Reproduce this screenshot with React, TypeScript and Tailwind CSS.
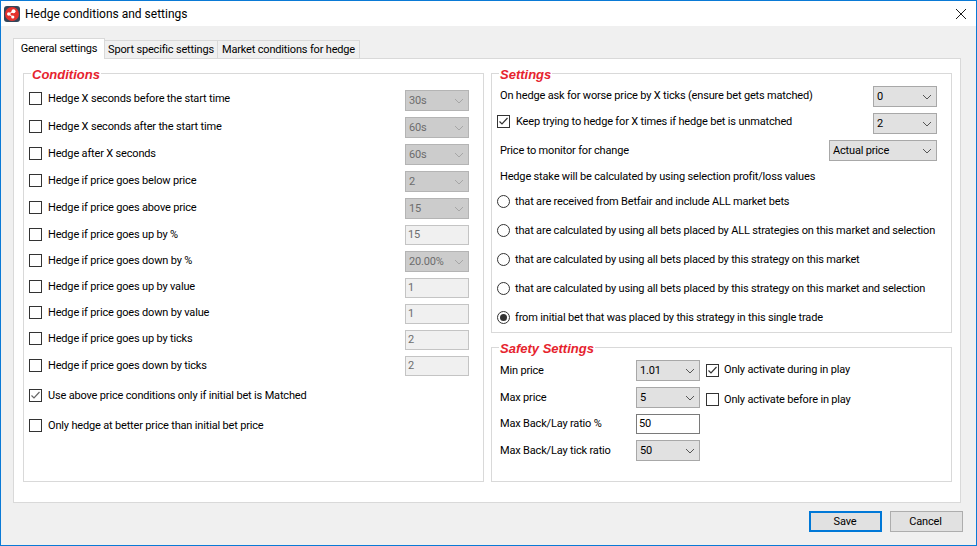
const leftRows: { label: string; mt: string; checked?: boolean }[] = [
  { label: "Hedge X seconds before the start time", mt: "mt-0" },
  { label: "Hedge X seconds after the start time", mt: "mt-[15px]" },
  { label: "Hedge after X seconds", mt: "mt-[14px]" },
  { label: "Hedge if price goes below price", mt: "mt-[14px]" },
  { label: "Hedge if price goes above price", mt: "mt-[14px]" },
  { label: "Hedge if price goes up by %", mt: "mt-[14px]" },
  { label: "Hedge if price goes down by %", mt: "mt-[13px]" },
  { label: "Hedge if price goes up by value", mt: "mt-[13px]" },
  { label: "Hedge if price goes down by value", mt: "mt-[13px]" },
  { label: "Hedge if price goes up by ticks", mt: "mt-[13px]" },
  { label: "Hedge if price goes down by ticks", mt: "mt-[14px]" },
  { label: "Use above price conditions only if initial bet is Matched", mt: "mt-[17px]", checked: true },
  { label: "Only hedge at better price than initial bet price", mt: "mt-[17px]" },
];

const rightControls: { value: string; kind: "combo" | "input" }[] = [
  { value: "30s", kind: "combo" },
  { value: "60s", kind: "combo" },
  { value: "60s", kind: "combo" },
  { value: "2", kind: "combo" },
  { value: "15", kind: "combo" },
  { value: "15", kind: "input" },
  { value: "20.00%", kind: "combo" },
  { value: "1", kind: "input" },
  { value: "1", kind: "input" },
  { value: "2", kind: "input" },
  { value: "2", kind: "input" },
];

const radios = [
  "that are received from Betfair and include ALL market bets",
  "that are calculated by using all bets placed by ALL strategies on this market and selection",
  "that are calculated by using all bets placed by this strategy on this market",
  "that are calculated by using all bets placed by this strategy on this market and selection",
  "from initial bet that was placed by this strategy in this single trade",
];

function Chevron({ disabled }: { disabled?: boolean }) {
  return (
    <svg width="10" height="6" viewBox="0 0 10 6" className="shrink-0">
      <path d="M1 1 L5 5 L9 1" fill="none" stroke={disabled ? "#a6a6a6" : "#555555"} strokeWidth="1" />
    </svg>
  );
}

function Combo({ value, width = "w-[64px]", disabled }: { value: string; width?: string; disabled?: boolean }) {
  return (
    <div
      className={`${width} h-[21px] shrink-0 flex items-center justify-between pl-[3px] pr-[4px] border border-solid whitespace-nowrap ${
        disabled ? "bg-[#cccccc] border-[#b4b4b4] text-[#6d6d6d]" : "bg-[#e1e1e1] border-[#a8a8a8] text-black"
      }`}
    >
      <span>{value}</span>
      <Chevron disabled={disabled} />
    </div>
  );
}

function Check({ checked, muted }: { checked?: boolean; muted?: boolean }) {
  return (
    <span className="w-[13px] h-[13px] shrink-0 border border-[#333333] bg-white flex items-center justify-center">
      {checked && (
        <svg width="11" height="11" viewBox="0 0 11 11">
          <path d="M1.5 5.5 L4 8 L9.5 2" fill="none" stroke={muted ? "#666666" : "#333333"} strokeWidth="1.2" />
        </svg>
      )}
    </span>
  );
}

function Radio({ checked }: { checked?: boolean }) {
  return (
    <span className="w-[13px] h-[13px] shrink-0 rounded-full border border-[#333333] bg-white flex items-center justify-center">
      {checked && <span className="w-[7px] h-[7px] rounded-full bg-[#333333]" />}
    </span>
  );
}

function Legend({ children }: { children: string }) {
  return (
    <div className="absolute left-[7px] top-[-7px] bg-white px-[1px] h-[15px] leading-[15px] text-[13px] tracking-normal font-bold italic text-[#e6232e] whitespace-nowrap font-[Liberation_Sans,sans-serif]">
      {children}
    </div>
  );
}

export default function App() {
  return (
    <div className="w-[977px] h-[546px] border border-[#0a7ad6] bg-[#f0f0f0] flex flex-col overflow-hidden text-[11px] tracking-[-0.17px] leading-[14px] text-black font-[Roboto,sans-serif]">
      <div className="h-[25px] bg-white flex items-center shrink-0">
        <svg width="16" height="16" viewBox="0 0 16 16" className="ml-[3px] mt-[1px]">
          <rect x="0" y="0" width="16" height="16" rx="3" fill="#34465a" />
          <circle cx="8" cy="8" r="7" fill="#e5322d" />
          <circle cx="4.8" cy="8" r="1.8" fill="#ffffff" />
          <circle cx="9.5" cy="5.2" r="2" fill="#ffffff" />
          <circle cx="8.8" cy="11" r="1.6" fill="#ffffff" />
          <path d="M4.8 8 L9.5 5.2 M4.8 8 L8.8 11" stroke="#ffffff" strokeWidth="1" />
        </svg>
        <span className="ml-[5px] text-[12px] tracking-normal">Hedge conditions and settings</span>
        <svg width="12" height="12" viewBox="0 0 12 12" className="ml-auto mr-[9px]">
          <path d="M1 1 L11 11 M11 1 L1 11" stroke="#1a1a1a" strokeWidth="1" />
        </svg>
      </div>

      <div className="flex-1 flex flex-col pl-[12px] pr-[15px] pt-[12px] min-h-0">
        <div className="flex items-end h-[20px] shrink-0 relative z-10 whitespace-nowrap">
          <div className="w-[92px] h-[21px] -mb-[1px] bg-white border border-b-0 border-[#d9d9d9] flex items-center justify-center">
            General settings
          </div>
          <div className="w-[113px] h-[18px] pt-[1px] bg-[#f0f0f0] border-y border-r border-b-0 border-[#d9d9d9] flex items-center justify-center">
            Sport specific settings
          </div>
          <div className="w-[142px] h-[18px] pt-[1px] bg-[#f0f0f0] border-y border-r border-b-0 border-[#d9d9d9] flex items-center justify-center">
            Market conditions for hedge
          </div>
        </div>

        <div className="h-[445px] shrink-0 bg-white border border-[#d9d9d9] flex gap-[7px] pl-[9px] pt-[14px]">
          <div className="relative w-[461px] h-[409px] border border-[#d9d9d9] flex justify-between pt-[16px] pr-[14px]">
            <Legend>Conditions</Legend>
            <div className="flex flex-col pl-[5px] pt-[2px]">
              {leftRows.map((r) => (
                <div key={r.label} className={`flex items-center h-[13px] gap-[6px] ${r.mt}`}>
                  <Check checked={r.checked} muted />
                  <span className="whitespace-nowrap">{r.label}</span>
                </div>
              ))}
            </div>
            <div className="flex flex-col gap-[6px] w-[64px]">
              {rightControls.map((c, i) =>
                c.kind === "combo" ? (
                  <Combo key={i} value={c.value} disabled />
                ) : (
                  <div
                    key={i}
                    className="w-[64px] h-[20px] border border-[#c4c4c4] bg-[#f0f0f0] text-[#6d6d6d] flex items-center pl-[2px]"
                  >
                    {c.value}
                  </div>
                )
              )}
            </div>
          </div>

          <div className="w-[461px] flex flex-col gap-[14px]">
            <div className="relative h-[260px] border border-[#d9d9d9] pt-[12px] flex flex-col">
              <Legend>Settings</Legend>
              <div className="flex items-center justify-between h-[21px] pl-[8px] pr-[14px]">
                <span className="-mt-[1px] whitespace-nowrap">On hedge ask for worse price by X ticks (ensure bet gets matched)</span>
                <Combo value="0" />
              </div>
              <div className="flex justify-between h-[21px] mt-[6px] pl-[5px] pr-[14px]">
                <div className="flex items-center h-[13px] mt-[2px] gap-[6px]">
                  <Check checked />
                  <span className="whitespace-nowrap">Keep trying to hedge for X times if hedge bet is unmatched</span>
                </div>
                <Combo value="2" />
              </div>
              <div className="flex items-center justify-between h-[21px] mt-[6px] pl-[8px] pr-[14px]">
                <span className="whitespace-nowrap">Price to monitor for change</span>
                <Combo value="Actual price" width="w-[108px]" />
              </div>
              <div className="h-[16px] mt-[8px] pl-[8px] flex items-center whitespace-nowrap">
                Hedge stake will be calculated by using selection profit/loss values
              </div>
              <div className="flex flex-col gap-[16px] mt-[10px] pl-[5px]">
                {radios.map((r, i) => (
                  <div key={r} className="flex items-center h-[13px] gap-[5px]">
                    <Radio checked={i === 4} />
                    <span className="whitespace-nowrap">{r}</span>
                  </div>
                ))}
              </div>
            </div>

            <div className="relative h-[135px] border border-[#d9d9d9] pt-[12px] flex">
              <Legend>Safety Settings</Legend>
              <div className="flex flex-col gap-[6px] pl-[8px]">
                <div className="flex items-center h-[21px]">
                  <span className="w-[136px]">Min price</span>
                  <Combo value="1.01" />
                </div>
                <div className="flex items-center h-[21px]">
                  <span className="w-[136px]">Max price</span>
                  <Combo value="5" />
                </div>
                <div className="flex items-center h-[20px]">
                  <span className="w-[136px]">Max Back/Lay ratio %</span>
                  <div className="w-[64px] h-[20px] border border-[#7a7a7a] bg-white flex items-center pl-[2px]">50</div>
                </div>
                <div className="flex items-center h-[21px]">
                  <span className="w-[136px]">Max Back/Lay tick ratio</span>
                  <Combo value="50" />
                </div>
              </div>
              <div className="flex flex-col gap-[16px] ml-[6px] pt-[4px]">
                <div className="flex items-center h-[13px] gap-[5px]">
                  <Check checked />
                  <span className="-mt-[1px] whitespace-nowrap">Only activate during in play</span>
                </div>
                <div className="flex items-center h-[13px] gap-[5px]">
                  <Check />
                  <span className="whitespace-nowrap">Only activate before in play</span>
                </div>
              </div>
            </div>
          </div>
        </div>

        <div className="flex justify-end gap-[8px] mt-[8px] -mr-[2px]">
          <div className="w-[73px] h-[21px] pr-[1px] bg-[#e1e1e1] border-2 border-[#0078d7] flex items-center justify-center">Save</div>
          <div className="w-[73px] h-[21px] pr-[2px] bg-[#e1e1e1] border border-[#adadad] flex items-center justify-center">Cancel</div>
        </div>
      </div>
    </div>
  );
}
